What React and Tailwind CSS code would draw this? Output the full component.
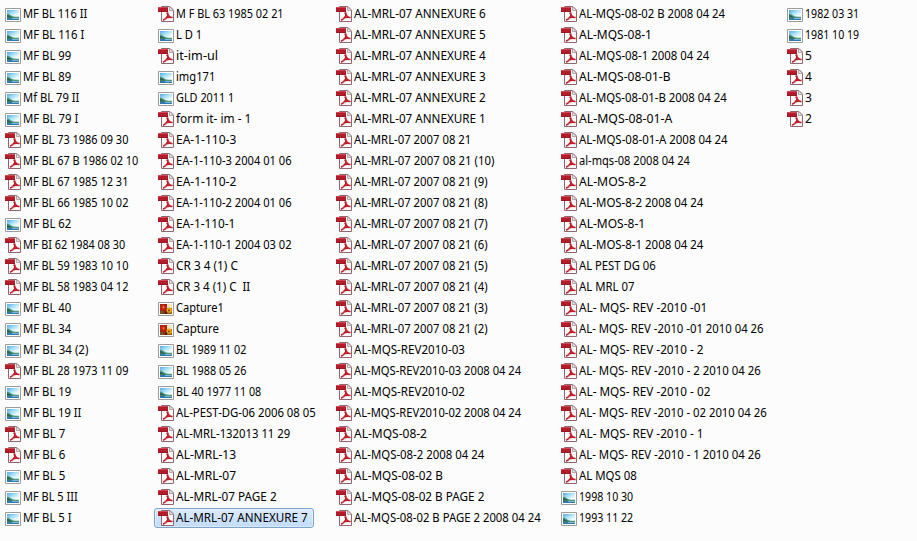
import { useLayoutEffect, useRef } from "react";

// Each entry: [icon kind, file name, label width]
const columns = [
  {
    className: "w-[153px]",
    files: [
      ["img", "MF BL 116 II", 64], ["img", "MF BL 116 I", 61], ["img", "MF BL 99", 48], ["img", "MF BL 89", 48],
      ["img", "Mf BL 79 II", 56], ["img", "MF BL 79 I", 55], ["pdf", "MF BL 73 1986 09 30", 105],
      ["pdf", "MF BL 67 B 1986 02 10", 115], ["pdf", "MF BL 67 1985 12 31", 105], ["pdf", "MF BL 66 1985 10 02", 105],
      ["img", "MF BL 62", 48], ["pdf", "MF BI 62 1984 08 30", 102], ["pdf", "MF BL 59 1983 10 10", 105],
      ["pdf", "MF BL 58 1983 04 12", 105], ["img", "MF BL 40", 48], ["img", "MF BL 34", 48], ["img", "MF BL 34 (2)", 65],
      ["pdf", "MF BL 28 1973 11 09", 105], ["img", "MF BL 19", 48], ["img", "MF BL 19 II", 58], ["pdf", "MF BL 7", 42],
      ["pdf", "MF BL 6", 42], ["img", "MF BL 5", 42], ["img", "MF BL 5 III", 55], ["img", "MF BL 5 I", 49],
    ],
  },
  {
    className: "w-[178px]",
    files: [
      ["pdf", "M F BL 63 1985 02 21", 108], ["img", "L D 1", 26], ["pdf", "it-im-ul", 42], ["img", "img171", 39],
      ["img", "GLD 2011 1", 58], ["pdf", "form it- im - 1", 75], ["pdf", "EA-1-110-3", 60], ["pdf", "EA-1-110-3 2004 01 06", 116],
      ["pdf", "EA-1-110-2", 60], ["pdf", "EA-1-110-2 2004 01 06", 116], ["pdf", "EA-1-110-1", 59],
      ["pdf", "EA-1-110-1 2004 03 02", 116], ["pdf", "CR 3 4 (1) C", 62], ["pdf", "CR 3 4 (1) C  II", 74],
      ["thumb", "Capture1", 48], ["thumb", "Capture", 43], ["img", "BL 1989 11 02", 70], ["img", "BL 1988 05 26", 70],
      ["img", "BL 40 1977 11 08", 85], ["pdf", "AL-PEST-DG-06 2006 08 05", 140], ["pdf", "AL-MRL-132013 11 29", 114],
      ["pdf", "AL-MRL-13", 60], ["pdf", "AL-MRL-07", 60], ["pdf", "AL-MRL-07 PAGE 2", 101],
      ["pdf", "AL-MRL-07 ANNEXURE 7", 132, true],
    ],
  },
  {
    className: "w-[225px]",
    files: [
      ["pdf", "AL-MRL-07 ANNEXURE 6", 132], ["pdf", "AL-MRL-07 ANNEXURE 5", 132], ["pdf", "AL-MRL-07 ANNEXURE 4", 132],
      ["pdf", "AL-MRL-07 ANNEXURE 3", 132], ["pdf", "AL-MRL-07 ANNEXURE 2", 132], ["pdf", "AL-MRL-07 ANNEXURE 1", 132],
      ["pdf", "AL-MRL-07 2007 08 21", 117], ["pdf", "AL-MRL-07 2007 08 21 (10)", 140], ["pdf", "AL-MRL-07 2007 08 21 (9)", 134],
      ["pdf", "AL-MRL-07 2007 08 21 (8)", 134], ["pdf", "AL-MRL-07 2007 08 21 (7)", 134], ["pdf", "AL-MRL-07 2007 08 21 (6)", 134],
      ["pdf", "AL-MRL-07 2007 08 21 (5)", 134], ["pdf", "AL-MRL-07 2007 08 21 (4)", 134], ["pdf", "AL-MRL-07 2007 08 21 (3)", 134],
      ["pdf", "AL-MRL-07 2007 08 21 (2)", 134], ["pdf", "AL-MQS-REV2010-03", 111], ["pdf", "AL-MQS-REV2010-03 2008 04 24", 167],
      ["pdf", "AL-MQS-REV2010-02", 111], ["pdf", "AL-MQS-REV2010-02 2008 04 24", 167], ["pdf", "AL-MQS-08-2", 73],
      ["pdf", "AL-MQS-08-2 2008 04 24", 130], ["pdf", "AL-MQS-08-02 B", 89], ["pdf", "AL-MQS-08-02 B PAGE 2", 130],
      ["pdf", "AL-MQS-08-02 B PAGE 2 2008 04 24", 187],
    ],
  },
  {
    className: "w-[226px]",
    files: [
      ["pdf", "AL-MQS-08-02 B 2008 04 24", 146], ["pdf", "AL-MQS-08-1", 73], ["pdf", "AL-MQS-08-1 2008 04 24", 130],
      ["pdf", "AL-MQS-08-01-B", 92], ["pdf", "AL-MQS-08-01-B 2008 04 24", 148], ["pdf", "AL-MQS-08-01-A", 93],
      ["pdf", "AL-MQS-08-01-A 2008 04 24", 149], ["pdf", "al-mqs-08 2008 04 24", 111], ["pdf", "AL-MOS-8-2", 67],
      ["pdf", "AL-MOS-8-2 2008 04 24", 124], ["pdf", "AL-MOS-8-1", 66], ["pdf", "AL-MOS-8-1 2008 04 24", 124],
      ["pdf", "AL PEST DG 06", 77], ["pdf", "AL MRL 07", 56], ["pdf", "AL- MQS- REV -2010 -01", 128],
      ["pdf", "AL- MQS- REV -2010 -01 2010 04 26", 185], ["pdf", "AL- MQS- REV -2010 - 2", 125],
      ["pdf", "AL- MQS- REV -2010 - 2 2010 04 26", 182], ["pdf", "AL- MQS- REV -2010 - 02", 131],
      ["pdf", "AL- MQS- REV -2010 - 02 2010 04 26", 188], ["pdf", "AL- MQS- REV -2010 - 1", 125],
      ["pdf", "AL- MQS- REV -2010 - 1 2010 04 26", 182], ["pdf", "AL MQS 08", 58], ["img", "1998 10 30", 54],
      ["img", "1993 11 22", 54],
    ],
  },
  {
    className: "w-[134px]",
    files: [
      ["img", "1982 03 31", 54], ["img", "1981 10 19", 54], ["pdf", "5", 7], ["pdf", "4", 7], ["pdf", "3", 7], ["pdf", "2", 7],
    ],
  },
];

function PdfIcon() {
  return (
    <svg className="h-4 w-4 shrink-0" viewBox="0 0 16 16">
      <path d="M3.5.5H12L15.5 4v11.5h-12z" fill="#fdfafa" stroke="#8f6670" />
      <path d="M11.5.5V4.5h4z" fill="#dfe1e3" stroke="#a39499" strokeWidth=".8" />
      <path
        d="M8.8 6.5C10 8.6 10 10.4 13.8 11.8M9.8 6.5v3.3C8.8 12 7.4 13.4 5 14.2M7.4 12.2c2-1 4.2-1.3 7.2-.7"
        fill="none"
        stroke="#c01c28"
        strokeWidth="1.6"
      />
      <path d="M0 1h10v5H0z" fill="#b51c2a" />
      <path d="M0 1h10v1H0z" fill="#cf4a55" />
      <path d="M0 5h10v1H0z" fill="#961824" />
    </svg>
  );
}

function PictureIcon() {
  return (
    <svg className="mt-0.5 h-3.5 w-4 shrink-0" viewBox="0 0 16 14">
      <defs>
        <linearGradient id="sky" x1="0" y1="0" x2=".7" y2="1">
          <stop offset="0" stopColor="#55a8e4" />
          <stop offset=".4" stopColor="#a9e0f8" />
          <stop offset=".75" stopColor="#f2fdff" />
        </linearGradient>
      </defs>
      <path d="M.5.5h15v13H.5z" fill="#fff" stroke="#9c9c9c" />
      <path d="M2 2h12v10H2z" fill="url(#sky)" />
      <path d="M2 5.5c2 .2 3.5 1.6 5 2.5 2 .8 4.8.8 7 .8V10H2z" fill="#4d967c" />
      <path d="M2 7c2 .3 3.6 1.2 6 2.6H2z" fill="#2a6552" />
      <path d="M2 10h12v2H2z" fill="#2f79b0" />
      <path d="M7 10h7v1H7z" fill="#79b8d8" />
    </svg>
  );
}

function ThumbIcon() {
  return (
    <svg className="mt-0.5 h-3.5 w-4 shrink-0" viewBox="0 0 16 14">
      <path d="M.5.5h15v13H.5z" fill="#fff" stroke="#9c9c9c" />
      <path d="M2 2h7v10H2z" fill="#a3200f" />
      <path d="M9 2h5v4H9z" fill="#f1e6bf" />
      <path d="M8 6h6v6H8z" fill="#8a5410" />
      <circle cx="5" cy="5.3" r="2.8" fill="#c9240f" />
      <circle cx="5.5" cy="5.3" r="1" fill="#e88a4a" />
      <circle cx="11.3" cy="8.2" r="2.6" fill="#eda516" />
      <circle cx="11" cy="8.4" r=".9" fill="#6b3205" />
      <path d="M2 9h3.5v3H2z" fill="#6d5a2b" />
      <path d="M7 9.5h2V12H7z" fill="#4e1d08" />
    </svg>
  );
}

const icons = { pdf: PdfIcon, img: PictureIcon, thumb: ThumbIcon };

// Condenses the name horizontally so it fills its label width exactly.
function Label({ text, width }) {
  const ref = useRef(null);
  useLayoutEffect(() => {
    const el = ref.current;
    el.style.transform = `scaleX(${width / el.offsetWidth})`;
  }, [text, width]);
  return (
    <span className="ml-0.5 whitespace-pre" style={{ width }}>
      <span ref={ref} className="inline-block origin-left">
        {text}
      </span>
    </span>
  );
}

function File({ kind, name, width, selected }) {
  const Icon = icons[kind];
  return (
    <li
      className={
        selected
          ? "flex h-5 w-40 items-center rounded-[3px] border border-[#7da2ce] bg-linear-to-b from-[#dcebfc] to-[#c1dbfc] pl-[3px] shadow-[inset_0_0_0_1px_rgba(255,255,255,0.4)]"
          : "flex h-5 items-center pl-1"
      }
    >
      <Icon />
      <Label text={name} width={width} />
    </li>
  );
}

export default function App() {
  return (
    <main className="flex h-[541px] w-[917px] overflow-hidden bg-[#fcfcfc] pt-1 pl-px font-['Noto_Sans',sans-serif] text-[12px] leading-5 text-black">
      {columns.map((column, i) => (
        <ul key={i} className={`flex shrink-0 flex-col gap-px ${column.className}`}>
          {column.files.map(([kind, name, width, selected]) => (
            <File key={name} kind={kind} name={name} width={width} selected={selected} />
          ))}
        </ul>
      ))}
    </main>
  );
}
